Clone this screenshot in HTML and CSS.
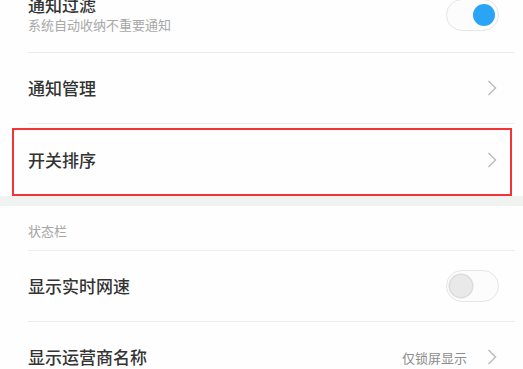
FILE: index.html
```html
<!DOCTYPE html>
<html lang="zh-CN">
<head>
<meta charset="utf-8">
<link rel="stylesheet" href="styles.css">
</head>
<body>
<div class="page">
  <div class="group">
    <div class="item">
      <div class="inner">
        <div class="texts">
          <div class="title">通知过滤</div>
          <div class="sub">系统自动收纳不重要通知</div>
        </div>
        <span class="switch on"><span class="knob"></span></span>
      </div>
    </div>
    <div class="item">
      <div class="inner">
        <div class="title">通知管理</div>
        <svg class="chev" width="10" height="16" viewBox="0 0 10 16"><path d="M1.5 1 L8.5 8 L1.5 15" fill="none" stroke="#bdbdbd" stroke-width="1.5"/></svg>
      </div>
    </div>
    <div class="item last marked">
      <div class="inner">
        <div class="title">开关排序</div>
        <svg class="chev" width="10" height="16" viewBox="0 0 10 16"><path d="M1.5 1 L8.5 8 L1.5 15" fill="none" stroke="#bdbdbd" stroke-width="1.5"/></svg>
      </div>
    </div>
  </div>
  <div class="gap"></div>
  <div class="group">
    <div class="item header">
      <div class="inner">
        <div class="section">状态栏</div>
      </div>
    </div>
    <div class="item">
      <div class="inner">
        <div class="title">显示实时网速</div>
        <span class="switch off"><span class="knob"></span></span>
      </div>
    </div>
    <div class="item last">
      <div class="inner">
        <div class="title">显示运营商名称</div>
        <div class="right">
          <span class="value">仅锁屏显示</span>
          <svg class="chev" width="10" height="16" viewBox="0 0 10 16"><path d="M1.5 1 L8.5 8 L1.5 15" fill="none" stroke="#bdbdbd" stroke-width="1.5"/></svg>
        </div>
      </div>
    </div>
  </div>
</div>
</body>
</html>
```

FILE: styles.css
```css
html, body {
  margin: 0;
  padding: 0;
  background: #ffffff;
  overflow: hidden;
}
body {
  width: 523px;
  height: 369px;
  font-family: "Noto Sans CJK SC", "Noto Sans", sans-serif;
  color: #2b2b2b;
}
.page {
  margin-top: -18px;
}
.group {
  background: #fefefe;
}
.item {
  padding-left: 28px;
  position: relative;
}
.inner {
  height: 70px;
  margin-right: 8px;
  padding-right: 18px;
  border-bottom: 1px solid #ececec;
  display: flex;
  align-items: center;
  justify-content: space-between;
}
.item.last .inner {
  border-bottom: none;
}
.item.last.marked .inner {
  height: 72px;
}
.item.header .inner {
  height: 44px;
}
.title {
  font-size: 17px;
  line-height: 20px;
  font-weight: 500;
  color: #333333;
}
.texts {
  display: flex;
  flex-direction: column;
  margin-top: -4px;
}
.sub {
  font-size: 13px;
  line-height: 20px;
  color: #a8a8a8;
}
.section {
  font-size: 13px;
  color: #a5a5a5;
  margin-top: 4px;
}
.chev {
  display: block;
}
.right {
  display: flex;
  align-items: center;
  gap: 20px;
}
.value {
  font-size: 13px;
  color: #8d8d8d;
}
.switch {
  width: 53px;
  height: 32px;
  box-sizing: border-box;
  border: 1.5px solid #e6e6e6;
  border-radius: 16px;
  background: #fcfcfc;
  display: flex;
  align-items: center;
  padding: 0 3px;
  margin-right: -2px;
}
.switch.on {
  justify-content: flex-end;
  margin-top: -4px;
}
.switch .knob {
  width: 22px;
  height: 22px;
  border-radius: 50%;
}
.switch.on .knob {
  background: #2aa4f4;
}
.switch.off .knob {
  background: #e9e9e9;
  box-shadow: 0 0 0 1.5px #dcdcdc;
}
.gap {
  height: 10px;
  background: #f1f3f1;
}
.marked::after {
  content: "";
  position: absolute;
  left: 12px;
  top: 4px;
  right: 11px;
  bottom: 0;
  border: 2.5px solid #f23434;
}
```
